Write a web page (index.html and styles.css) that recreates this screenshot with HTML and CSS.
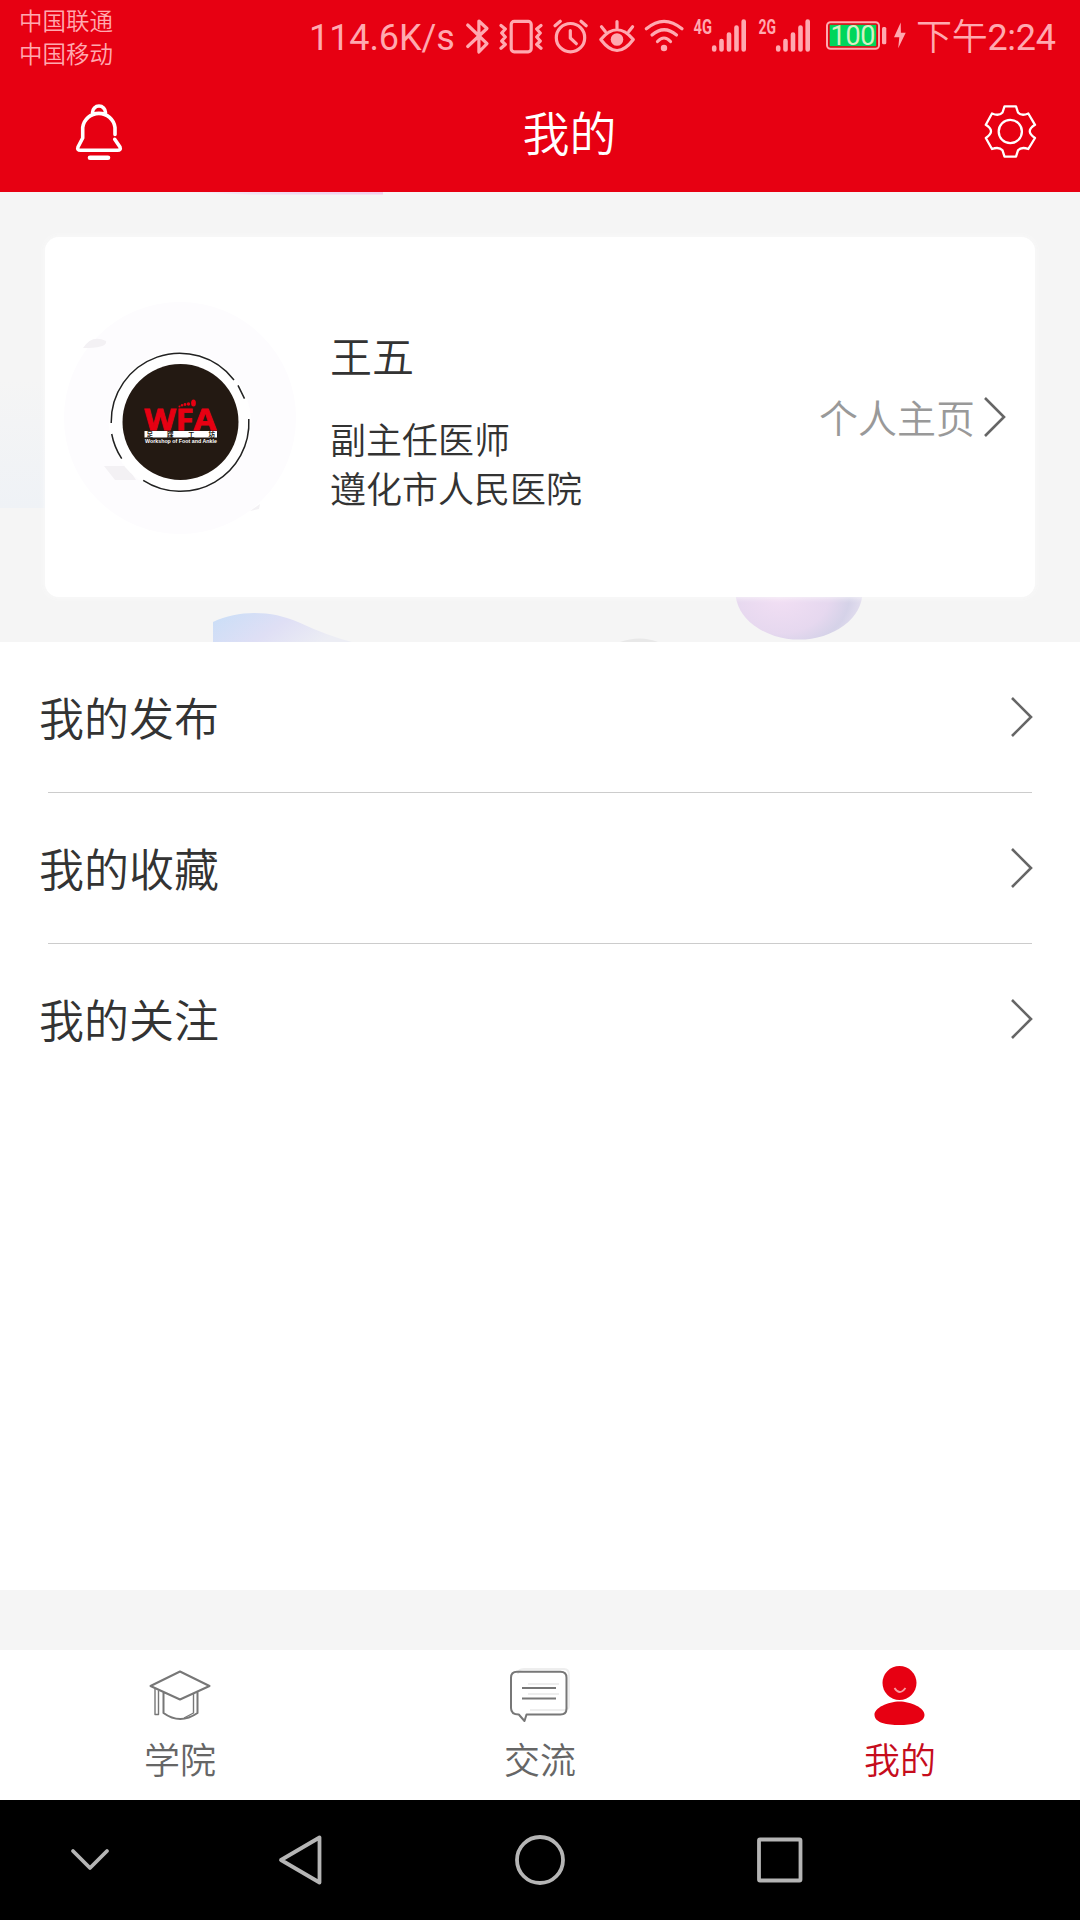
FILE: index.html
```html
<!DOCTYPE html>
<html lang="zh-CN">
<head>
<meta charset="utf-8">
<title>我的</title>
<link rel="stylesheet" href="styles.css">
</head>
<body>
<div class="screen">
  <header class="status">
    <div class="carriers"><span>中国联通</span><span>中国移动</span></div>
    <div class="indicators">
      <span class="speed">114.6K/s</span>
      <svg class="ico" width="32" height="72" viewBox="462 0 32 72"><path d="M467.7 25 487 43.7 478.9 52V21L487 28.5 467.7 46.5"/></svg>
      <svg class="ico" width="52" height="72" viewBox="494 0 52 72"><rect x="511.2" y="21.4" width="20" height="30.4" rx="3"/><path d="M501 25.5 505.3 29 501.7 33 505.3 37 501.7 41 505.3 44.5 501 48.2M541 25.5 536.7 29 540.3 33 536.7 37 540.3 41 536.7 44.5 541 48.2"/></svg>
      <svg class="ico" width="48" height="72" viewBox="546 0 48 72"><circle cx="570.5" cy="37.7" r="14.2"/><path d="M570.3 30.5V38L576.3 43.7M555 25.8 560.3 21.3M581 21.3 586.2 25.8"/></svg>
      <svg class="ico" width="46" height="72" viewBox="594 0 46 72"><path d="M600.8 39.5Q617 20 633.3 39.5Q617 61.500 600.8 39.500ZM617 21.500V28.500M601.500 26.800 605.300 31.500M632.600 26.800 628.800 31.500"/><circle class="solid" cx="617" cy="39.500" r="6.300"/></svg>
      <svg class="ico" width="48" height="72" viewBox="640 0 48 72"><path d="M646.300 28.800Q664 13.800 682 28.800M652 35Q664 24.500 676.500 35M657.500 41.500Q664 34.500 670.500 41.500"/><circle class="solid" cx="664" cy="48" r="3.200"/></svg>
      <svg class="ico" width="64" height="72" viewBox="688 0 64 72"><text class="net" x="693.500" y="34" textLength="18.500" lengthAdjust="spacingAndGlyphs">4G</text><path class="bars" d="M714.200 47.500V49.500M721.500 41V49.500M729 34.500V49.500M736.500 27.500V49.500M743.700 21.500V49.500"/></svg>
      <svg class="ico" width="68" height="72" viewBox="752 0 68 72"><text class="net" x="758.500" y="34" textLength="17.500" lengthAdjust="spacingAndGlyphs">2G</text><path class="bars" d="M778.200 47.500V49.500M785.500 41V49.500M793 34.500V49.500M800.500 27.500V49.500M807.700 21.500V49.500"/></svg>
      <svg class="ico" width="70" height="72" viewBox="820 0 70 72"><rect class="cell" x="827" y="22.300" width="52" height="26.500" rx="3.500"/><rect class="charge" x="829.700" y="24.800" width="46.500" height="21.400"/><rect class="solid" x="882" y="27" width="4.300" height="17.300" rx="1.500"/><text class="pct" x="830.500" y="44.800" textLength="45">100</text></svg>
      <svg class="ico" width="24" height="72" viewBox="890 0 24 72"><path class="solid" d="M900.700 22.500 894 37.300H899.300L898.200 48.200 905.700 32.700H900.900Z"/></svg>
      <span class="time">下午<span class="digits">2:24</span></span>
    </div>
  </header>

  <div class="titlebar">
    <svg class="bell" width="60" height="64" viewBox="69 99.500 60 64"><path d="M115 134V127A16.300 16.300 0 0 0 82.700 127V137.500L78 146.500Q76.800 149.800 80.500 149.800H117.500Q121.200 149.800 120 146.500L114.700 138.800M92.500 112A6.500 6.500 0 0 1 105.500 112"/><path class="clapper" d="M90 157.300H108"/></svg>
    <h1>我的</h1>
    <svg class="gear" width="60" height="60" viewBox="980 102 60 60"><path d="M1004.500 106.300H1016L1018 112.500Q1021.500 116.500 1028.300 113.500L1035 124.800Q1024.500 131.300 1035 138L1028.300 149Q1021.500 146.500 1018 150.300L1016 156.700H1004.500L1002.500 150.300Q999 146.500 992 149L985.800 138Q996.200 131.300 985.800 124.800L992 113.500Q999 116.500 1002.500 112.500Z"/><circle cx="1010.300" cy="131.500" r="11.600"/></svg>
  </div>

  <section class="profile">
    <svg class="decor" width="1080" height="450" viewBox="0 192 1080 450">
      <defs>
        <linearGradient id="wave" x1="0" y1="0" x2="1" y2="0.300"><stop offset="0" stop-color="#c9def7"/><stop offset=".55" stop-color="#dfdff5"/><stop offset="1" stop-color="#ecedf4"/></linearGradient>
        <radialGradient id="ball" cx=".35" cy=".55" r=".7"><stop offset="0" stop-color="#f2dff4"/><stop offset=".55" stop-color="#e6d8ef"/><stop offset=".78" stop-color="#d5d2e8"/><stop offset="1" stop-color="#e9e4f2"/></radialGradient>
        <linearGradient id="side" x1="0" y1="0" x2="0" y2="1"><stop offset="0" stop-color="#f5f5f5"/><stop offset="1" stop-color="#eff2f6"/></linearGradient>
        <linearGradient id="top" x1="0" y1="0" x2="1" y2="0"><stop offset="0" stop-color="#f5f0f7"/><stop offset=".6" stop-color="#efd6f0"/><stop offset="1" stop-color="#f3cdeb"/></linearGradient>
      </defs>
      <path d="M180 192H383V194.500H250Z" fill="url(#top)"/>
      <path d="M0 380H45V508H0Z" fill="url(#side)"/>
      <path d="M213 622C240 609 273 611 298 622Q328 636 352 642H213Z" fill="url(#wave)"/>
      <ellipse cx="799" cy="592" rx="63.500" ry="47.500" fill="url(#ball)"/>
      <path d="M620 642Q640 635 658 642Z" fill="#e8e8e8"/>
    </svg>
    <div class="card">
      <svg class="avatar" width="240" height="260" viewBox="60 287 240 260">
        <circle cx="180" cy="418" r="116" fill="#fdfcfe"/>
        <path d="M83 348Q92 334 106 341Q108 348 83 348ZM104 466H127L136 480H115ZM250 511 260 504 259 509Z" fill="#f3f1f4"/>
        <circle cx="180" cy="422" r="71" fill="#fff"/>
        <circle cx="180.500" cy="422" r="58" fill="#231912"/>
        <path class="ring" d="M111.200 423A68.500 68.500 0 0 1 234 380M238 385.300 244.500 398.700M248.800 419A68.500 68.500 0 0 1 143.200 480.300M121.700 458.700A68.500 68.500 0 0 1 111.700 434"/>
        <text class="wfa" x="144.500" y="429.500" textLength="71.500" lengthAdjust="spacingAndGlyphs">WFA</text>
        <g fill="#e70012"><ellipse cx="193.500" cy="403" rx="2.400" ry="3.500"/><circle cx="188.500" cy="404" r="1.700"/><circle cx="185" cy="404.500" r="1.400"/><circle cx="182" cy="405.300" r="1.200"/><circle cx="179.500" cy="406.500" r="1"/></g>
        <rect x="144.500" y="431" width="72.500" height="6.500" fill="#fff"/>
        <text class="seal" x="146.500 167 188 208.500" y="436.700">足踝工坊</text>
        <text class="motto" x="145" y="442.800" textLength="72" lengthAdjust="spacingAndGlyphs">Workshop of Foot and Ankle</text>
      </svg>
      <div class="person"><h2>王五</h2><p>副主任医师</p><p>遵化市人民医院</p></div>
      <div class="home"><span>个人主页</span><svg class="chev" width="24" height="42" viewBox="0 0 24 42"><path d="M2 2 21 21 2 40"/></svg></div>
    </div>
  </section>

  <main class="list">
    <div class="row"><span>我的发布</span><svg class="chev" width="24" height="42" viewBox="0 0 24 42"><path d="M2 2 21 21 2 40"/></svg></div>
    <div class="row"><span>我的收藏</span><svg class="chev" width="24" height="42" viewBox="0 0 24 42"><path d="M2 2 21 21 2 40"/></svg></div>
    <div class="row"><span>我的关注</span><svg class="chev" width="24" height="42" viewBox="0 0 24 42"><path d="M2 2 21 21 2 40"/></svg></div>
  </main>

  <nav class="tabs">
    <div class="tab">
      <svg width="72" height="66" viewBox="144 1662 72 66"><path d="M150.500 1686 180 1671.500 209.500 1686 180 1699.500ZM163.500 1692V1713Q180 1725 197.500 1713V1692"/><path class="thin" d="M155 1689V1714.500H158.500V1690.500M193.500 1694V1713L184 1718"/></svg>
      <span>学院</span>
    </div>
    <div class="tab">
      <svg width="72" height="66" viewBox="504 1662 72 66"><path class="echo" d="M518 1674Q518 1669 524 1669H564Q569 1669 569 1675V1705Q569 1710 564 1710H530M528 1684H559M528 1694H559"/><path d="M517 1671.800H560.500Q566.500 1671.800 566.500 1677.800V1708.500Q566.500 1714.500 560.500 1714.500H526.500L524.500 1721 518.800 1714.500Q511 1714.500 511 1708V1677.800Q511 1671.800 517 1671.800ZM522 1688H556M522 1698.500H556"/></svg>
      <span>交流</span>
    </div>
    <div class="tab active">
      <svg width="72" height="66" viewBox="864 1662 72 66"><circle class="body" cx="899.500" cy="1683" r="17"/><path class="body" d="M874.500 1715C874 1708 888 1701.500 899.500 1701.500C911 1701.500 925 1708 924.500 1715C924 1723 912 1725 899.500 1725C887 1725 875 1723 874.500 1715Z"/><path class="smile" d="M894.500 1688Q899.500 1696 905.500 1688"/></svg>
      <span>我的</span>
    </div>
  </nav>

  <footer class="navbar">
    <svg width="180" height="120" viewBox="0 0 180 120"><path d="M73 51 90 68 107 51"/></svg>
    <svg width="240" height="120" viewBox="180 0 240 120"><path d="M319.500 37.500V82.500L281 60Z"/></svg>
    <svg width="240" height="120" viewBox="420 0 240 120"><circle cx="540" cy="60" r="23"/></svg>
    <svg width="240" height="120" viewBox="660 0 240 120"><rect x="759" y="39.500" width="41.500" height="41" rx="1"/></svg>
  </footer>
</div>
</body>
</html>
```
FILE: styles.css
```css
* { box-sizing: border-box; }
body {
  margin: 0;
  font-family: Roboto, "Noto Sans CJK SC", sans-serif;
  font-weight: 350;
  color: #333;
}
h1, h2, p { margin: 0; font-weight: inherit; }
svg { display: block; flex: none; }
.screen {
  width: 1080px;
  height: 1920px;
  display: flex;
  flex-direction: column;
  background: #f5f5f5;
  overflow: hidden;
}

/* status bar */
.status {
  height: 72px;
  flex: none;
  display: flex;
  justify-content: space-between;
  padding: 0 23px 0 19px;
  background: #e70012;
  color: #ffa9b0;
}
.carriers {
  display: flex;
  flex-direction: column;
  padding-top: 6px;
  font-size: 23.5px;
  line-height: 32.5px;
}
.indicators { display: flex; font-size: 36px; line-height: 76px; }
.speed { width: 153px; letter-spacing: -0.1px; font-weight: 400; }
.time { width: 143px; padding-left: 2px; letter-spacing: -0.3px; white-space: nowrap; }
.digits { font-weight: 400; }
.ico { fill: none; stroke: #ffa9b0; stroke-width: 3.2; stroke-linejoin: round; stroke-linecap: round; }
.ico .solid { fill: #ffa9b0; stroke: none; }
.ico .bars { stroke-width: 4.6; }
.ico .cell { stroke-width: 2; }
.ico .charge { fill: #00d65b; stroke: none; }
.ico text { fill: #ffa9b0; stroke: none; font-family: Roboto, sans-serif; }
.ico .net { font-size: 20px; font-weight: 700; }
.ico .pct { font-size: 27px; font-weight: 400; fill: #d8f0c4; }

/* title bar */
.titlebar {
  height: 120px;
  flex: none;
  display: grid;
  grid-template-columns: 60px 1fr 60px;
  align-items: center;
  padding: 0 40px 0 69px;
  background: #e70012;
  color: #fff;
}
.titlebar h1 { padding: 6px 0 0 30px; font-size: 47px; line-height: 60px; text-align: center; }
.titlebar svg { fill: none; stroke: #fff; stroke-linejoin: round; stroke-linecap: round; }
.bell { stroke-width: 3.6; }
.bell .clapper { stroke-width: 4.6; }
.gear { stroke-width: 2.3; }

/* profile */
.profile { position: relative; height: 450px; flex: none; padding: 45px; }
.decor { position: absolute; left: 0; top: 0; }
.card {
  position: relative;
  height: 360px;
  display: flex;
  align-items: center;
  padding: 0 28px 0 15px;
  border-radius: 14px;
  background: #fff;
  box-shadow: 0 0 6px #fafafa;
}
.ring { fill: none; stroke: #222; stroke-width: 1.5; }
.wfa { font: 700 29px "Open Sans", sans-serif; fill: #e70012; stroke: #e70012; stroke-width: 0.8; }
.seal { font: 700 6.5px "Noto Sans CJK SC", sans-serif; fill: #231912; }
.motto { font: 700 6px "Liberation Sans", sans-serif; fill: #fff; }
.person { flex: 1; padding: 11px 0 0 30px; font-size: 36px; line-height: 49px; }
.person h2 { font-size: 42px; line-height: 60px; margin-bottom: 29px; }
.home { display: flex; align-items: center; gap: 8px; font-size: 39px; color: #999; }
.home span { margin-top: -2px; }
.chev { fill: none; stroke: #666; stroke-width: 2.6; }

/* menu list */
.list { height: 948px; flex: none; background: #fff; }
.row {
  height: 151px;
  display: flex;
  align-items: center;
  justify-content: space-between;
  padding: 0 46px 2px 39px;
  font-size: 45px;
  background: linear-gradient(#ccc, #ccc) 48px 150px / 984px 1px no-repeat;
}
.row:last-child { background: none; }

/* bottom tabs */
.tabs { height: 150px; flex: none; margin-top: 60px; display: flex; background: #fff; }
.tab {
  flex: 1;
  display: flex;
  flex-direction: column;
  align-items: center;
  padding-top: 12px;
  font-size: 36px;
  line-height: 68px;
  color: #666;
}
.tab svg { fill: none; stroke: #777; stroke-width: 2; stroke-linejoin: round; }
.tab .thin { stroke-width: 1.4; }
.tab .echo { stroke: #eee; }
.tab .body { fill: #e70012; stroke: none; }
.tab .smile { stroke: #f79ba2; stroke-width: 1.8; }
.tab.active { color: #c60c1c; }

/* system navigation */
.navbar { height: 120px; flex: none; display: flex; background: #000; }
.navbar svg { fill: none; stroke: #b5b5b5; stroke-width: 3.8; stroke-linejoin: round; stroke-linecap: round; }
```
